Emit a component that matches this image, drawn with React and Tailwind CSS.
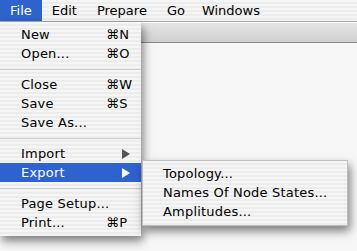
import React from "react";

const stripes =
  "bg-[repeating-linear-gradient(180deg,#f5f5f5_0px,#f5f5f5_2px,#ececec_2px,#ececec_4px)]";

function Item({ label, shortcut, arrow, active }) {
  return (
    <div
      className={`flex h-[19px] items-center pl-[21px] pr-[10px] ${
        active ? "bg-[#2d62cf] text-white" : "text-black"
      }`}
    >
      <span className="flex-1 whitespace-nowrap">{label}</span>
      {shortcut && <span className="w-[25px] whitespace-nowrap">{shortcut}</span>}
      {arrow && (
        <svg width="8" height="10" viewBox="0 0 8 10" className="mr-[1px]">
          <polygon points="0,0 8,5 0,10" fill={active ? "#ffffff" : "#555555"} />
        </svg>
      )}
    </div>
  );
}

function Sep() {
  return (
    <div className="flex h-[12px] items-center">
      <div className="h-px w-full bg-[#cfcfcf]" />
    </div>
  );
}

export default function App() {
  return (
    <div
      className="relative h-[251px] w-[357px] overflow-hidden bg-[#f7f7f7] text-[13px] tracking-[0.2px]"
      style={{ fontFamily: '"DejaVu Sans", "Liberation Sans", sans-serif' }}
    >
      {/* menubar */}
      <div className={`flex h-[21px] items-center tracking-normal ${stripes} bg-[#f0f0f0]`}>
        <div className="flex h-full items-center bg-[#2d62cf] px-[10px] text-white">File</div>
        <div className="px-[10px]">Edit</div>
        <div className="px-[10px]">Prepare</div>
        <div className="pl-[10px] pr-[7px]">Go</div>
        <div className="px-[10px]">Windows</div>
      </div>
      <div className="h-px bg-[#a9a9a9]" />
      {/* window title band */}
      <div className="h-[21px] border-t border-white border-b border-b-[#8a8a8a] bg-[linear-gradient(180deg,#e6e6e6,#d0d0d0)]" />

      {/* File menu */}
      <div
        className={`absolute left-0 top-[22px] w-[141px] pt-[3px] pb-[4px] ${stripes} shadow-[2px_5px_9px_rgba(0,0,0,0.5)]`}
      >
        <Item label="New" shortcut="⌘N" />
        <Item label="Open..." shortcut="⌘O" />
        <Sep />
        <Item label="Close" shortcut="⌘W" />
        <Item label="Save" shortcut="⌘S" />
        <Item label="Save As..." />
        <Sep />
        <Item label="Import" arrow />
        <Item label="Export" arrow active />
        <Sep />
        <Item label="Page Setup..." />
        <Item label="Print..." shortcut="⌘P" />
      </div>

      {/* Export submenu */}
      <div
        className={`absolute left-[142px] top-[160px] w-[206px] border border-[#bdbdbd] pt-[3px] pb-[4px] ${stripes} shadow-[2px_5px_9px_rgba(0,0,0,0.5)]`}
      >
        {["Topology...", "Names Of Node States...", "Amplitudes..."].map((t) => (
          <div key={t} className="flex h-[19px] items-center whitespace-nowrap pl-[20px]">
            {t}
          </div>
        ))}
      </div>
    </div>
  );
}
